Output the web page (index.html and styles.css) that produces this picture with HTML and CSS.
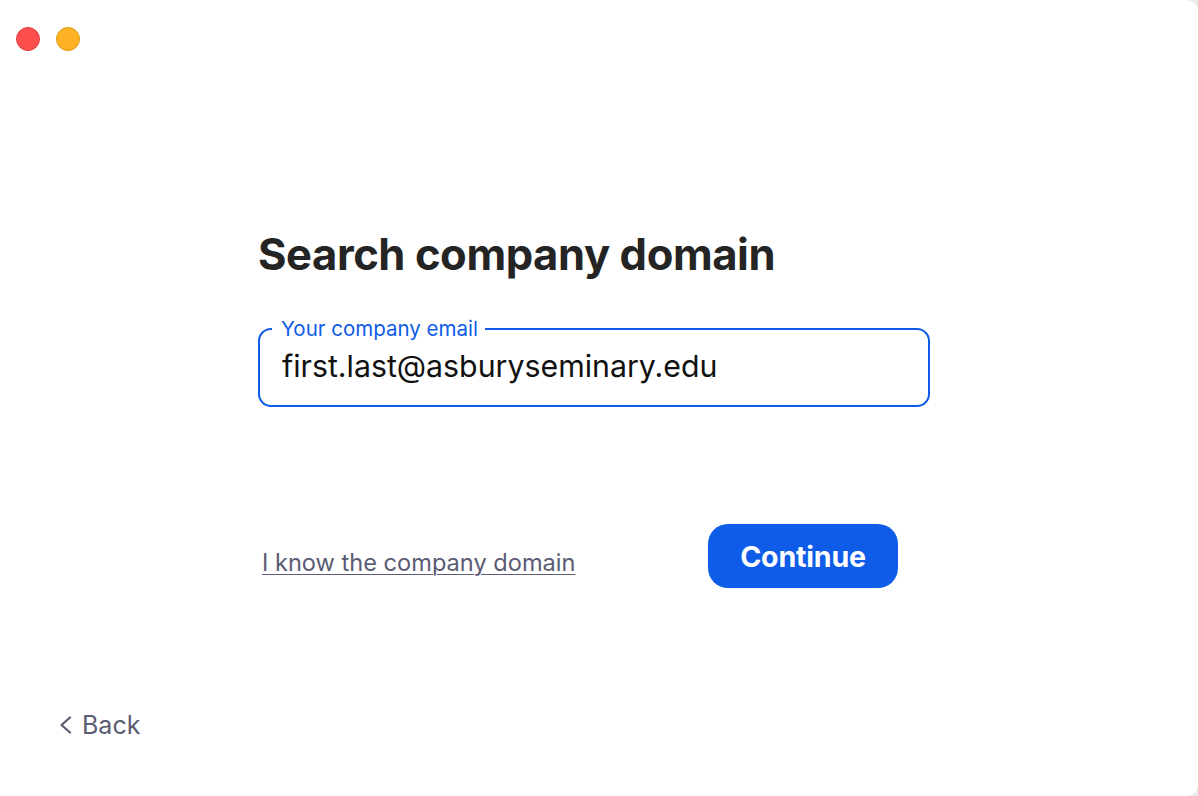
FILE: index.html
```html
<!DOCTYPE html>
<html>
<head>
<meta charset="utf-8">
<link rel="stylesheet" href="styles.css">
</head>
<body>
<div class="window">
  <div class="titlebar">
    <span class="dot red"></span>
    <span class="dot yellow"></span>
  </div>
  <main class="content">
    <h1 class="title">Search company domain</h1>
    <fieldset class="field">
      <legend class="field-label">Your company email</legend>
      <div class="field-value">first.last@asburyseminary.edu</div>
    </fieldset>
    <div class="actions">
      <a class="link" href="#">I know the company domain</a>
      <button class="btn">Continue</button>
    </div>
  </main>
  <footer class="footer">
    <a class="back" href="#">
      <svg class="chev" width="14" height="20" viewBox="0 0 14 20"><path d="M12 2.5 L3.5 10 L12 17.5" fill="none" stroke="#5c5c72" stroke-width="2.3" stroke-linecap="round" stroke-linejoin="round"/></svg>
      <span>Back</span>
    </a>
  </footer>
</div>
</body>
</html>
```
FILE: styles.css
```css
html, body {
  margin: 0;
  padding: 0;
  background: #ececec;
}
body {
  font-family: Inter, "Noto Sans", "Liberation Sans", sans-serif;
  width: 1198px;
  height: 796px;
  overflow: hidden;
}
.window {
  width: 1198px;
  height: 796px;
  background: #fff;
  border-radius: 0 12px 12px 0;
  display: flex;
  flex-direction: column;
  box-sizing: border-box;
}
.titlebar {
  display: flex;
  gap: 16px;
  padding: 27px 0 0 16px;
  height: 24px;
}
.dot {
  width: 24px;
  height: 24px;
  border-radius: 50%;
  box-sizing: border-box;
}
.red { background: #fe4f4e; border: 1px solid #e0403f; }
.yellow { background: #feb224; border: 1px solid #e09a12; }
.content {
  flex: 1;
  padding: 0 0 0 258px;
  display: flex;
  flex-direction: column;
}
.title {
  margin: 177px 0 0 0;
  font-size: 43.5px;
  font-weight: 700;
  color: #242424;
  letter-spacing: -0.4px;
  line-height: 52px;
  height: 52px;
}
.field {
  margin: 38px 0 0 0;
  width: 672px;
  height: 89px;
  box-sizing: border-box;
  border: 2px solid #0f5ce6;
  border-radius: 13px;
  padding: 0 0 0 22px;
  min-width: 0;
}
.field-label {
  font-size: 20.5px;
  color: #0f5ce6;
  padding: 0 7px 0 9px;
  margin-left: -10px;
  line-height: 22px;
}
.field-value {
  font-size: 30.3px;
  color: #111;
  margin-top: 8px;
  line-height: 36px;
}
.actions {
  margin-top: 117px;
  width: 640px;
  display: flex;
  align-items: flex-start;
}
.link {
  font-size: 23.6px;
  line-height: 28px;
  color: #5b5b74;
  margin-left: 4px;
  margin-top: 25px;
  text-decoration: underline;
  text-underline-offset: 3px;
  text-decoration-thickness: 1px;
}
.btn {
  margin-left: auto;
  width: 190px;
  height: 64px;
  border: none;
  border-radius: 20px;
  background: #0f5ce8;
  color: #fff;
  font-family: inherit;
  font-size: 28.6px;
  font-weight: 700;
  letter-spacing: -0.2px;
  padding: 0;
}
.footer {
  padding: 0 0 55px 58px;
}
.back {
  display: flex;
  align-items: center;
  gap: 10px;
  color: #5c5c72;
  text-decoration: none;
  font-size: 25px;
  line-height: 32px;
}
```
